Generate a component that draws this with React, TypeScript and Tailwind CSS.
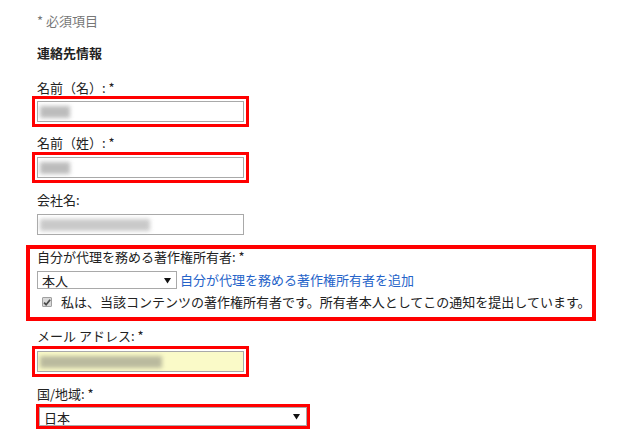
import React from "react";

const font = { fontFamily: '"Noto Sans CJK JP", "Noto Sans", sans-serif' };

function Arrow() {
  return (
    <svg width="7" height="7" viewBox="0 0 7 7">
      <path d="M0 1 L7 1 L3.5 6.5 Z" fill="#111" />
    </svg>
  );
}

function Blur({ w, color = "#b5b5b5" }: { w: number; color?: string }) {
  return (
    <div
      className="h-[12px] blur-[2px] opacity-90"
      style={{ width: w, background: color }}
    />
  );
}

export default function App() {
  return (
    <div
      className="w-[624px] h-[440px] bg-white overflow-hidden text-[13px] text-[#222] flex flex-col"
      style={font}
    >
      <p className="mt-[12px] ml-[37px] leading-[18px] text-[#777]">* 必須項目</p>
      <p className="mt-[14px] ml-[37px] leading-[18px] font-bold">連絡先情報</p>

      <p className="mt-[18px] ml-[37px] leading-[16px]">名前（名）: *</p>
      <div className="mt-[5px] ml-[37px] w-[207px] h-[21px] border border-[#a9a9a9] bg-white flex items-center pl-[2px] [outline:3px_solid_#ff0000] [outline-offset:2px]">
        <Blur w={30} />
      </div>

      <p className="mt-[13px] ml-[37px] leading-[16px]">名前（姓）: *</p>
      <div className="mt-[6px] ml-[37px] w-[207px] h-[21px] border border-[#a9a9a9] bg-white flex items-center pl-[2px] [outline:3px_solid_#ff0000] [outline-offset:2px]">
        <Blur w={30} />
      </div>

      <p className="mt-[14px] ml-[37px] leading-[16px]">会社名:</p>
      <div className="mt-[6px] ml-[37px] w-[207px] h-[21px] border border-[#a9a9a9] bg-white flex items-center pl-[2px]">
        <Blur w={110} color="#c4c4c4" />
      </div>

      <div className="mt-[10px] ml-[26px] w-[570px] border-4 border-[#ff0000] pl-[7px] pb-[7px] flex flex-col">
        <p className="leading-[16px]">自分が代理を務める著作権所有者: *</p>
        <div className="mt-[6px] flex items-center">
          <div className="w-[140px] h-[18px] border border-[#a9a9a9] bg-white flex items-center justify-between pl-[4px] pr-[5px]">
            <span className="leading-[16px] mt-[2px]">本人</span>
            <Arrow />
          </div>
          <span className="ml-[3px] leading-[16px] text-[#2563c9]">自分が代理を務める著作権所有者を追加</span>
        </div>
        <div className="mt-[5px] flex items-center">
          <div className="ml-[5px] w-[10px] h-[10px] border border-[#a0a0a0] bg-[#d9d9d9] flex items-center justify-center rounded-[1px]">
            <svg width="9" height="9" viewBox="0 0 9 9">
              <path d="M1.2 4.6 L3.5 7 L8 1.4" stroke="#4a4a4a" strokeWidth="2" fill="none" />
            </svg>
          </div>
          <span className="ml-[9px] leading-[16px]">私は、当該コンテンツの著作権所有者です。所有者本人としてこの通知を提出しています。</span>
        </div>
      </div>

      <p className="mt-[7px] ml-[37px] leading-[16px]">メール アドレス: *</p>
      <div className="mt-[7px] ml-[37px] w-[207px] h-[21px] border border-[#a9a9a9] bg-[#fafac8] flex items-center pl-[2px] [outline:3px_solid_#ff0000] [outline-offset:2px]">
        <Blur w={122} color="#b4b49a" />
      </div>

      <p className="mt-[14px] ml-[37px] leading-[16px]">国/地域: *</p>
      <div className="mt-[5px] ml-[39px] w-[268px] h-[19px] border border-[#a9a9a9] bg-white flex items-center justify-between pl-[4px] pr-[6px] [outline:3px_solid_#ff0000]">
        <span className="leading-[16px] mt-[2px]">日本</span>
        <Arrow />
      </div>
    </div>
  );
}
